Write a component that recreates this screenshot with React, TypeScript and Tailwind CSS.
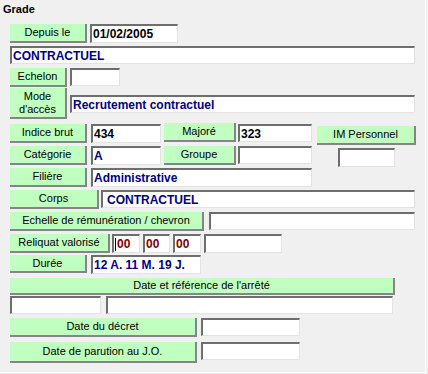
import React from "react";

type BoxProps = {
    className?: string;
    children?: React.ReactNode;
};

// green "button-like" caption
const Label = ({ className = "", children }: BoxProps) => (
    <div className={`flex shrink-0 items-center justify-center bg-[#c0ffc0] border-r-2 border-b-2 border-[#858585] text-[11px] leading-[13px] text-black text-center ${className}`}>
        {children}
    </div>
);

// sunken white text box
const Field = ({ className = "", children }: BoxProps) => (
    <div className={`flex shrink-0 items-center bg-white border-t-2 border-l-2 border-[#6e6e6e] border-r border-b border-r-[#e3e3e3] border-b-[#e3e3e3] pl-px text-[12px] font-bold leading-[14px] whitespace-nowrap overflow-hidden ${className}`}>
        {children}
    </div>
);

const App = () => {
    return (
        <div className="w-[428px] h-[374px] bg-[#f0f0f0] font-['Liberation_Sans',Arial,sans-serif]">
            <div className="w-[426px] h-[373px] border-r border-b border-white flex flex-col">
                <div className="h-[24px] pt-[3px] pl-[3px] text-[11px] leading-[13px] font-bold text-black">Grade</div>

                <div className="flex items-start h-[22px] pl-[10px]">
                    <Label className="w-[77px] h-[19px]">Depuis le</Label>
                    <Field className="ml-[3px] w-[88px] h-[19px] text-black">01/02/2005</Field>
                </div>

                <div className="flex items-start h-[21px] pl-[10px]">
                    <Field className="w-[405px] h-[18px] text-[#000080]">CONTRACTUEL</Field>
                </div>

                <div className="flex items-start h-[57px] pl-[10px]">
                    <div className="flex flex-col w-[57px]">
                        <Label className="mt-px w-[57px] h-[19px]">Echelon</Label>
                        <Label className="mt-px w-[57px] h-[31px]">
                            Mode
                            <br />
                            d'accès
                        </Label>
                    </div>
                    <div className="flex flex-col ml-[3px]">
                        <Field className="mt-px w-[50px] h-[18px]"></Field>
                        <Field className="mt-[9px] w-[345px] h-[18px] text-[#000080]">Recrutement contractuel</Field>
                    </div>
                </div>

                <div className="flex items-start h-[22px] pl-[10px]">
                    <Label className="w-[77px] h-[19px]">Indice brut</Label>
                    <Field className="ml-[4px] w-[70px] h-[19px] text-black">434</Field>
                    <Label className="-mt-px ml-[3px] w-[72px] h-[19px]">Majoré</Label>
                    <Field className="ml-[2px] w-[74px] h-[18px] text-black">323</Field>
                    <Label className="mt-[2px] ml-[5px] w-[99px] h-[19px]">IM Personnel</Label>
                </div>

                <div className="flex items-start h-[22px] pl-[10px]">
                    <Label className="w-[77px] h-[19px]">Catégorie</Label>
                    <Field className="ml-[4px] w-[70px] h-[19px] text-[#000080]">A</Field>
                    <Label className="ml-[3px] w-[72px] h-[19px]">Groupe</Label>
                    <Field className="ml-[2px] w-[74px] h-[18px]"></Field>
                    <Field className="mt-[2px] ml-[26px] w-[57px] h-[19px]"></Field>
                </div>

                <div className="flex items-start h-[22px] pl-[10px]">
                    <Label className="w-[77px] h-[19px]">Filière</Label>
                    <Field className="ml-[4px] w-[221px] h-[19px] text-[#000080]">Administrative</Field>
                </div>

                <div className="flex items-start h-[22px] pl-[10px]">
                    <Label className="w-[89px] h-[19px]">Corps</Label>
                    <Field className="ml-[2px] w-[314px] h-[18px] text-[#000080]">
                        <span className="pl-[3px]">CONTRACTUEL</span>
                    </Field>
                </div>

                <div className="flex items-start h-[22px] pl-[10px]">
                    <Label className="w-[194px] h-[19px]">Echelle de rémunération / chevron</Label>
                    <Field className="ml-[5px] w-[206px] h-[18px]"></Field>
                </div>

                <div className="flex items-start h-[21px] pl-[10px]">
                    <Label className="w-[100px] h-[19px]">Reliquat valorisé</Label>
                    <Field className="ml-[2px] w-[28px] h-[19px] text-[#800000]">
                        <span className="w-px h-[13px] bg-black mr-px"></span>00
                    </Field>
                    <Field className="ml-[3px] w-[27px] h-[19px] text-[#800000]">00</Field>
                    <Field className="ml-[3px] w-[28px] h-[19px] text-[#800000]">00</Field>
                    <Field className="ml-[3px] w-[78px] h-[19px]"></Field>
                </div>

                <div className="flex items-start h-[23px] pl-[10px]">
                    <Label className="w-[77px] h-[18px]">Durée</Label>
                    <Field className="ml-[4px] w-[110px] h-[19px] text-[#000080]">12 A. 11 M. 19 J.</Field>
                </div>

                <div className="flex items-start h-[18px] pl-[10px]">
                    <Label className="w-[385px] h-[17px]">Date et référence de l'arrêté</Label>
                </div>

                <div className="flex items-start h-[22px] pl-[10px]">
                    <Field className="w-[91px] h-[18px]"></Field>
                    <Field className="ml-[5px] w-[287px] h-[18px]"></Field>
                </div>

                <div className="flex items-start h-[24px] pl-[10px]">
                    <Label className="w-[187px] h-[19px]">Date du décret</Label>
                    <Field className="ml-[4px] w-[99px] h-[18px]"></Field>
                </div>

                <div className="flex items-start pl-[10px]">
                    <Label className="w-[187px] h-[21px]">Date de parution au J.O.</Label>
                    <Field className="ml-[4px] w-[99px] h-[18px]"></Field>
                </div>
            </div>
        </div>
    );
};

export default App;
